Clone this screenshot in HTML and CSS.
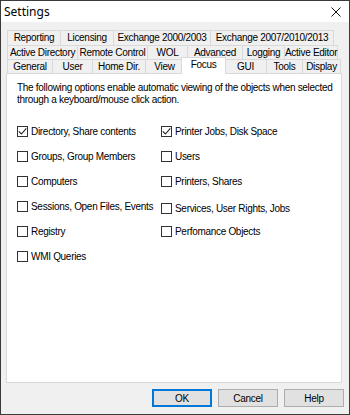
FILE: index.html
```html
<!DOCTYPE html>
<html>
<head>
<meta charset="utf-8">
<link rel="stylesheet" href="styles.css">
</head>
<body>
<div class="window">
  <div class="titlebar">
    <span class="title">Settings</span>
    <svg class="close" width="10" height="10" viewBox="0 0 10 10"><path d="M0.5 0.5 L9.5 9.5 M9.5 0.5 L0.5 9.5" stroke="#111" stroke-width="1" fill="none"/></svg>
  </div>
  <div class="client">
    <div class="tabs">
      <div class="tabrow r1">
        <div class="tab w54">Reporting</div>
        <div class="tab w54">Licensing</div>
        <div class="tab w98">Exchange 2000/2003</div>
        <div class="tab w124">Exchange 2007/2010/2013</div>
      </div>
      <div class="tabrow r2">
        <div class="tab w71">Active Directory</div>
        <div class="tab w71">Remote Control</div>
        <div class="tab w41">WOL</div>
        <div class="tab w56">Advanced</div>
        <div class="tab w43">Logging</div>
        <div class="tab w54">Active Editor</div>
      </div>
      <div class="tabrow r3">
        <div class="tab w46">General</div>
        <div class="tab w41">User</div>
        <div class="tab w54">Home Dir.</div>
        <div class="tab w39">View</div>
        <div class="tab sel w43">Focus</div>
        <div class="tab w43">GUI</div>
        <div class="tab w37">Tools</div>
        <div class="tab w39">Display</div>
      </div>
    </div>
    <div class="panel">
      <p class="intro">The following options enable automatic viewing of the objects when selected<br>through a keyboard/mouse click action.</p>
      <div class="opts">
        <label class="opt"><span class="box on"><svg width="9" height="9" viewBox="0 0 9 9"><path d="M0.8 4.4 L3.4 7 L8.3 1.4" stroke="#222" stroke-width="1.1" fill="none"/></svg></span>Directory, Share contents</label>
        <label class="opt"><span class="box on"><svg width="9" height="9" viewBox="0 0 9 9"><path d="M0.8 4.4 L3.4 7 L8.3 1.4" stroke="#222" stroke-width="1.1" fill="none"/></svg></span>Printer Jobs, Disk Space</label>
        <label class="opt"><span class="box"></span>Groups, Group Members</label>
        <label class="opt"><span class="box"></span>Users</label>
        <label class="opt"><span class="box"></span>Computers</label>
        <label class="opt"><span class="box"></span>Printers, Shares</label>
        <label class="opt"><span class="box"></span>Sessions, Open Files, Events</label>
        <label class="opt low"><span class="box"></span>Services, User Rights, Jobs</label>
        <label class="opt"><span class="box"></span>Registry</label>
        <label class="opt"><span class="box"></span>Perfomance Objects</label>
        <label class="opt"><span class="box"></span>WMI Queries</label>
      </div>
    </div>
    <div class="buttons">
      <div class="btn def">OK</div>
      <div class="btn">Cancel</div>
      <div class="btn">Help</div>
    </div>
  </div>
</div>
</body>
</html>
```

FILE: styles.css
```css
* { box-sizing: border-box; }
html, body { margin: 0; padding: 0; }
body {
  width: 350px;
  height: 415px;
  font-family: "Liberation Sans", Arial, sans-serif;
  font-size: 10px;
  letter-spacing: -0.3px;
  color: #000;
  background: #f0f0f0;
}
.window {
  width: 350px;
  height: 415px;
  border: 1px solid #3a3a3a;
  display: flex;
  flex-direction: column;
  background: #f0f0f0;
}
.titlebar {
  height: 21px;
  background: #fff;
  display: flex;
  align-items: center;
  justify-content: space-between;
  padding: 0 8px 0 3px;
  flex: none;
}
.title {
  font-family: "Noto Sans", "Open Sans", sans-serif;
  font-size: 12px;
  letter-spacing: 0;
  color: #000;
}
.close { display: block; margin-top: 1px; }
.client {
  flex: 1;
  display: flex;
  flex-direction: column;
  padding: 8px 6px 0 5px;
}
.tabs {
  margin-left: 1px;
  display: flex;
  flex-direction: column;
}
.tabrow {
  display: flex;
  height: 14px;
}
.tabrow.r1 { height: 15px; }
.tab {
  flex: none;
  text-align: center;
  border: 1px solid #d9d9d9;
  border-bottom: none;
  margin-right: -1px;
  background: #f0f0f0;
  line-height: 13px;
  white-space: nowrap;
  color: #000;
}
.w37 { width: 37px; }
.w39 { width: 39px; }
.w41 { width: 41px; }
.w43 { width: 43px; }
.w46 { width: 46px; }
.w54 { width: 54px; }
.w56 { width: 56px; }
.w71 { width: 71px; }
.w98 { width: 98px; }
.w124 { width: 124px; }
.tabrow.r3 { position: relative; z-index: 2; height: 14px; }
.tab.sel {
  background: #fff;
  margin-top: -2px;
  height: 17px;
  margin-left: -2px;
  margin-right: -2px;
  width: 45px;
  position: relative;
  z-index: 3;
  line-height: 14px;
}
.panel {
  width: 336px;
  height: 310px;
  background: #fff;
  border: 1px solid #d9d9d9;
  padding: 8px 0 0 10px;
  flex: none;
}
.intro {
  margin: 0;
  line-height: 12px;
  white-space: nowrap;
}
.opts {
  margin-top: 13px;
  display: grid;
  grid-template-columns: 144px 1fr;
  grid-auto-rows: 25px;
}
.opt {
  display: flex;
  align-items: center;
  gap: 3px;
  height: 25px;
  white-space: nowrap;
}
.opt.low { padding-top: 4px; }
.box {
  width: 11px;
  height: 11px;
  border: 1px solid #333;
  background: #fff;
  flex: none;
  display: flex;
  align-items: center;
  justify-content: center;
}
.buttons {
  display: flex;
  justify-content: flex-end;
  gap: 6px;
  margin-top: 6px;
  margin-right: -1px;
}
.btn {
  width: 60px;
  height: 18px;
  background: #e1e1e1;
  border: 1px solid #adadad;
  display: flex;
  align-items: center;
  justify-content: center;
}
.btn.def {
  border: 2px solid #0078d7;
}
```
